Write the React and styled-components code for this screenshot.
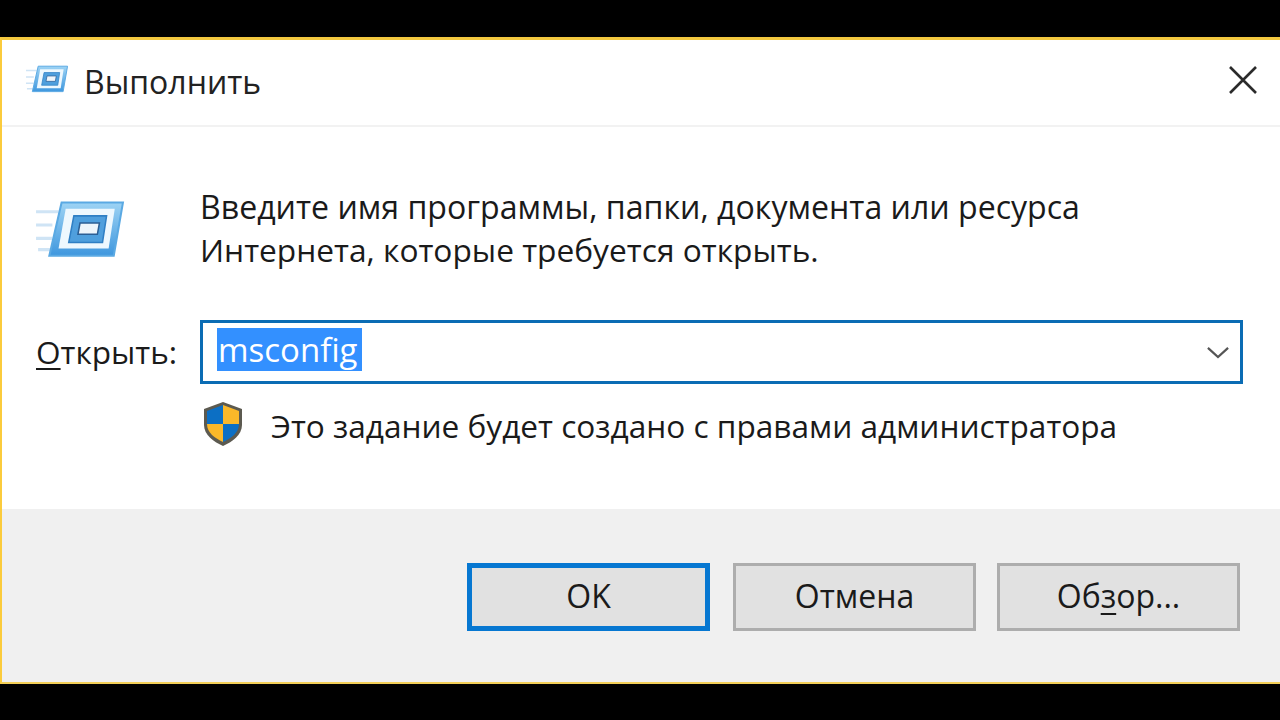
import React from "react";
import styled, { createGlobalStyle } from "styled-components";

const Global = createGlobalStyle`
  html, body { margin: 0; padding: 0; background: #000; }
  body { font-family: "Open Sans", "Noto Sans", sans-serif; color: #1a1a1a; }
`;

const Page = styled.div`
  width: 1280px;
  height: 720px;
  background: #000;
  padding-top: 37px;
  box-sizing: border-box;
  overflow: hidden;
`;

const Dialog = styled.div`
  height: 647px;
  box-sizing: border-box;
  background: #fff;
  border-top: 3px solid #f3c83f;
  border-bottom: 2px solid #f3cf58;
  border-left: 2px solid #fbcb3c;
  display: flex;
  flex-direction: column;
`;

const TitleBar = styled.div`
  height: 87px;
  flex: none;
  box-sizing: border-box;
  border-bottom: 2px solid #f2f2f2;
  display: flex;
  align-items: center;
  padding: 0 21px 6px 23px;
`;

const Title = styled.div`
  font-size: 32px;
  margin: 3px 0 0 15px;
  flex: 1;
  color: #222;
`;

const Body = styled.div`
  height: 382px;
  flex: none;
  box-sizing: border-box;
  padding-top: 57px;
`;

const IntroRow = styled.div`
  display: flex;
  align-items: flex-start;
  padding-left: 32px;
`;

const IntroIcon = styled.div`
  margin-top: 14px;
  flex: none;
  display: flex;
`;

const Intro = styled.div`
  margin-left: 74px;
  margin-top: 1px;
  white-space: nowrap;
`;

const IntroLine = styled.div`
  font-size: ${(p) => p.$size}px;
  line-height: 43px;
`;

const OpenRow = styled.div`
  display: flex;
  align-items: center;
  margin-top: 49px;
  padding-left: 34px;
`;

const OpenLabel = styled.div`
  width: 164px;
  font-size: 31.6px;
  margin-bottom: 2px;
  u { text-underline-offset: 4px; text-decoration-thickness: 2px; }
`;

const Combo = styled.div`
  width: 1043px;
  height: 64px;
  box-sizing: border-box;
  border: 3px solid #0b6cb4;
  display: flex;
  align-items: center;
  justify-content: space-between;
  padding: 0 11px 0 14px;
`;

const Selected = styled.span`
  background: #3390ff;
  color: #fff;
  font-size: 33px;
  line-height: 43px;
  height: 43px;
  display: block;
  box-sizing: border-box;
  width: 145px;
  padding-left: 1px;
  margin-bottom: 5px;
  white-space: nowrap;
`;

const NoteRow = styled.div`
  display: flex;
  align-items: center;
  margin-top: 17px;
  padding-left: 200px;
`;

const Note = styled.div`
  margin: 3px 0 0 27px;
  font-size: 31.6px;
  white-space: nowrap;
`;

const Footer = styled.div`
  flex: 1;
  background: #f0f0f0;
  display: flex;
  justify-content: flex-end;
  align-items: flex-start;
  padding: 54px 40px 0 0;
`;

const Button = styled.div`
  width: 243px;
  height: 68px;
  box-sizing: border-box;
  margin-left: ${(p) => p.$gap || 0}px;
  padding-bottom: 4px;
  background: #e1e1e1;
  border: ${(p) => (p.$primary ? "5px solid #0677d1" : "3px solid #adadad")};
  display: flex;
  align-items: center;
  justify-content: center;
  font-size: 32px;
  color: #1a1a1a;
  u { text-underline-offset: 5px; text-decoration-thickness: 2px; }
`;

function RunIcon({ size, id }) {
  return (
    <svg width={size} height={size * 0.7} viewBox="0 0 90 62" fill="none">
      <defs>
        <linearGradient id={id} x1="0" y1="0" x2="0" y2="1">
          <stop offset="0" stopColor="#9dd3f4" />
          <stop offset="1" stopColor="#3f97de" />
        </linearGradient>
      </defs>
      <path d="M2 13h22M2 26h16M2 39h16M4 50h12" stroke="#cfe4f5" strokeWidth="3" />
      <path d="M27 4h60l-9 52H15z" fill={`url(#${id})`} stroke="#5aa9e3" strokeWidth="2" />
      <path d="M31 10h48l-6 39H24z" fill="#eef8fe" />
      <path d="M39 17h32l-4 26H34z" fill="#4f9fdd" stroke="#2f7fc4" strokeWidth="1.5" />
      <path d="M45 24h19l-2 11H43z" fill="#eef5fb" stroke="#2c5f95" strokeWidth="1.5" />
    </svg>
  );
}

function ShieldIcon() {
  return (
    <svg width="42" height="46" viewBox="0 0 42 46">
      <path d="M21 1 L40 8 V24 C40 34 30 41 21 45 C12 41 2 34 2 24 V8 Z" fill="#5c5a50" />
      <path d="M21 4 V23 H5 V10 Z" fill="#0c6fc4" />
      <path d="M21 4 L37 10 V23 H21 Z" fill="#fbb829" />
      <path d="M5 23 H21 V41 C13 37 5 32 5 23 Z" fill="#fbb829" />
      <path d="M21 23 H37 C37 32 29 37 21 41 Z" fill="#0c6fc4" />
    </svg>
  );
}

export default function App() {
  return (
    <Page>
      <Global />
      <Dialog>
        <TitleBar>
          <RunIcon size={44} id="run-small" />
          <Title>Выполнить</Title>
          <svg width="32" height="32" viewBox="0 0 32 32">
            <path d="M3 3 L29 29 M29 3 L3 29" stroke="#2b2b2b" strokeWidth="2.6" />
          </svg>
        </TitleBar>
        <Body>
          <IntroRow>
            <IntroIcon>
              <RunIcon size={92} id="run-large" />
            </IntroIcon>
            <Intro>
              <IntroLine $size={32.1}>Введите имя программы, папки, документа или ресурса</IntroLine>
              <IntroLine $size={31.7}>Интернета, которые требуется открыть.</IntroLine>
            </Intro>
          </IntroRow>
          <OpenRow>
            <OpenLabel>
              <u>О</u>ткрыть:
            </OpenLabel>
            <Combo>
              <Selected>msconfig</Selected>
              <svg width="22" height="13" viewBox="0 0 24 14">
                <path d="M1 2 L12 12 L23 2" fill="none" stroke="#555" strokeWidth="2.4" />
              </svg>
            </Combo>
          </OpenRow>
          <NoteRow>
            <ShieldIcon />
            <Note>Это задание будет создано с правами администратора</Note>
          </NoteRow>
        </Body>
        <Footer>
          <Button $primary>OK</Button>
          <Button $gap={23}>Отмена</Button>
          <Button $gap={21}>
            <span>
              Об<u>з</u>ор...
            </span>
          </Button>
        </Footer>
      </Dialog>
    </Page>
  );
}
